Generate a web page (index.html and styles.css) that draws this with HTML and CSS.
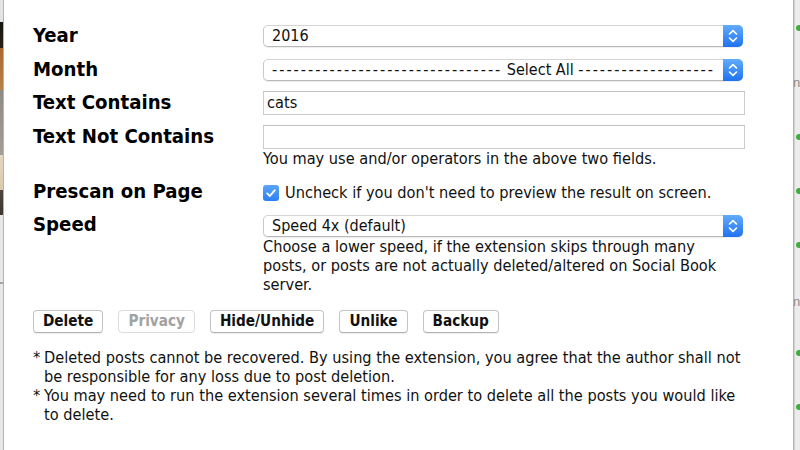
FILE: index.html
```html
<!DOCTYPE html>
<html lang="en">
<head>
<meta charset="utf-8">
<title>Social Book Post Manager</title>
<link rel="stylesheet" href="styles.css">
</head>
<body>
<div class="screen">
  <div class="bg-left"></div>
  <div class="panel">
    <div class="row row-select r-year">
      <div class="label">Year</div>
      <div class="select">
        <span class="value">2016</span>
        <span class="stepper"><svg width="20" height="22" viewBox="0 0 20 22"><path d="M6.5 9 L10 5.6 L13.5 9 M6.5 13 L10 16.4 L13.5 13" fill="none" stroke="#fff" stroke-width="1.6" stroke-linecap="round" stroke-linejoin="round"/></svg></span>
      </div>
    </div>
    <div class="row row-select r-month">
      <div class="label">Month</div>
      <div class="select">
        <span class="value centered"><span class="dashes">--------------------------------</span> Select All <span class="dashes">-------------------</span></span>
        <span class="stepper"><svg width="20" height="22" viewBox="0 0 20 22"><path d="M6.5 9 L10 5.6 L13.5 9 M6.5 13 L10 16.4 L13.5 13" fill="none" stroke="#fff" stroke-width="1.6" stroke-linecap="round" stroke-linejoin="round"/></svg></span>
      </div>
    </div>
    <div class="row r-contains">
      <div class="label">Text Contains</div>
      <div class="input">cats</div>
    </div>
    <div class="row r-notcontains">
      <div class="label">Text Not Contains</div>
      <div class="control">
        <div class="input"></div>
        <div class="help">You may use and/or operators in the above two fields.</div>
      </div>
    </div>
    <div class="row r-prescan">
      <div class="label">Prescan on Page</div>
      <div class="check-line"><span class="checkbox"><svg width="16" height="16" viewBox="0 0 16 16"><path d="M4.2 8.4 L6.9 11 L11.8 5.2" fill="none" stroke="#fff" stroke-width="1.9" stroke-linecap="round" stroke-linejoin="round"/></svg></span>Uncheck if you don't need to preview the result on screen.</div>
    </div>
    <div class="row row-select r-speed">
      <div class="label">Speed</div>
      <div class="control">
        <div class="select">
          <span class="value">Speed 4x (default)</span>
          <span class="stepper"><svg width="20" height="22" viewBox="0 0 20 22"><path d="M6.5 9 L10 5.6 L13.5 9 M6.5 13 L10 16.4 L13.5 13" fill="none" stroke="#fff" stroke-width="1.6" stroke-linecap="round" stroke-linejoin="round"/></svg></span>
        </div>
        <div class="help speed-help">Choose a lower speed, if the extension skips through many posts, or posts are not actually deleted/altered on Social Book server.</div>
      </div>
    </div>
    <div class="buttons">
      <button class="btn">Delete</button>
      <button class="btn" disabled>Privacy</button>
      <button class="btn">Hide/Unhide</button>
      <button class="btn">Unlike</button>
      <button class="btn">Backup</button>
    </div>
    <div class="notes">
      <div class="note"><span class="star">*</span><span>Deleted posts cannot be recovered. By using the extension, you agree that the author shall not be responsible for any loss due to post deletion.</span></div>
      <div class="note"><span class="star">*</span><span>You may need to run the extension several times in order to delete all the posts you would like to delete.</span></div>
    </div>
  </div>
  <div class="bg-right">
    <span class="dot"></span>
    <span class="ghost">n</span>
    <span class="dot"></span>
    <span class="dot"></span>
    <span class="dot"></span>
    <span class="ghost">n</span>
    <span class="dot"></span>
    <span class="dot"></span>
  </div>
</div>
</body>
</html>
```
FILE: styles.css
```css
* { box-sizing: border-box; }
html, body { margin: 0; padding: 0; }
body {
  width: 800px;
  height: 450px;
  overflow: hidden;
  font-family: "DejaVu Sans Condensed", "DejaVu Sans", sans-serif;
  color: #111;
  background: #fff;
}
.screen { display: flex; width: 800px; height: 450px; }

.bg-left {
  flex: none;
  width: 4px;
  border-right: 1px solid #b3b3b3;
  background: linear-gradient(to bottom,
    #e4e4e4 0, #e4e4e4 22px,
    #17140f 22px, #2a2118 48px,
    #a9682f 48px, #b8804a 90px,
    #8e8a84 90px, #a29d95 155px,
    #e4d7c2 155px, #d9cab1 190px,
    #4d463e 190px, #3c362f 215px,
    #e8e8e8 215px, #e8e8e8 282px,
    #a5a5a5 282px, #a5a5a5 284px,
    #e8e8e8 284px);
}

.panel {
  flex: none;
  width: 789px;
  background: #fff;
  padding: 25px 0 0 29px;
}

.bg-right {
  flex: 1;
  border-left: 1px solid #b4b4b4;
  box-shadow: inset 1px 0 0 #d2d2d2;
  background: #ececec;
  overflow: hidden;
  display: flex;
  flex-direction: column;
  align-items: flex-start;
}
.dot {
  display: block;
  flex: none;
  width: 6px;
  height: 6px;
  margin-left: 2px;
  border-radius: 50%;
  background: #3fae3c;
}
.ghost {
  display: block;
  flex: none;
  height: 12px;
  line-height: 12px;
  font-family: "Liberation Sans", sans-serif;
  font-size: 13px;
  color: #8b8b8b;
  margin-left: -1px;
}
.bg-right > :nth-child(1) { margin-top: 25px; }
.bg-right > :nth-child(2) { margin-top: 46px; }
.bg-right > :nth-child(3) { margin-top: 45px; }
.bg-right > :nth-child(4) { margin-top: 48px; }
.bg-right > :nth-child(5) { margin-top: 48px; }
.bg-right > :nth-child(6) { margin-top: 48px; }
.bg-right > :nth-child(7) { margin-top: 42px; }
.bg-right > :nth-child(8) { margin-top: 48px; }

.row {
  display: grid;
  grid-template-columns: 230px 482px;
  align-items: start;
}
.label {
  font-weight: bold;
  font-size: 20.2px;
  line-height: 22px;
  color: #000;
  white-space: nowrap;
}
.row-select .label { margin-top: -1px; }
.r-month { margin-top: 12px; }
.r-contains { margin-top: 10px; }
.r-notcontains { margin-top: 10px; }
.r-prescan { margin-top: 11.5px; align-items: baseline; }
.r-speed { margin-top: 11px; }
.r-speed .label { margin-top: -2px; }

.select {
  width: 480px;
  height: 22px;
  display: flex;
  align-items: stretch;
  border: 1px solid #c8c8c8;
  border-top-color: #d4d4d4;
  border-bottom-color: #b9b9b9;
  border-radius: 5px;
  background: #fff;
  box-shadow: 0 1px 1px rgba(0, 0, 0, 0.08);
  font-size: 16px;
  line-height: 20px;
  color: #111;
}
.select .value {
  flex: 1;
  padding-left: 8px;
  white-space: nowrap;
  overflow: hidden;
}
.select .value.centered { text-align: center; padding-left: 0; }
.dashes { letter-spacing: 2px; }
.stepper {
  flex: none;
  width: 20px;
  margin: -1px -1px -1px 0;
  border-radius: 0 5px 5px 0;
  background: linear-gradient(to bottom, #62acfb, #1f72f0);
  display: flex;
}
.stepper svg { display: block; }

.input {
  width: 482px;
  height: 24px;
  border: 1px solid #cbcbcb;
  border-top-color: #c2c2c2;
  background: #fff;
  font-size: 16.2px;
  line-height: 22px;
  padding-left: 3px;
  color: #111;
}

.help {
  font-size: 16.2px;
  line-height: 19px;
  color: #111;
}
.speed-help { width: 470px; }

.check-line {
  font-size: 16.2px;
  line-height: 22px;
  white-space: nowrap;
  color: #111;
}
.checkbox {
  display: inline-block;
  width: 16px;
  height: 16px;
  margin-right: 6px;
  vertical-align: -3px;
  border-radius: 3px;
  background: linear-gradient(to bottom, #5aa5fa, #2c7ff3);
}
.checkbox svg { display: block; }

.buttons {
  margin-top: 16px;
  display: flex;
  gap: 15px;
}
.btn {
  height: 23px;
  padding: 0 9px;
  border: 1px solid #c4c4c4;
  border-bottom-color: #b3b3b3;
  border-radius: 4px;
  background: #fff;
  box-shadow: 0 1px 1px rgba(0, 0, 0, 0.07);
  font-family: "DejaVu Sans Condensed", "DejaVu Sans", sans-serif;
  font-weight: bold;
  font-size: 15.2px;
  line-height: 21px;
  color: #111;
}
.btn:disabled {
  color: #a2a2a2;
  border-color: #dcdcdc;
  box-shadow: none;
}

.notes {
  margin-top: 15.5px;
  width: 712px;
  font-size: 16.2px;
  line-height: 19px;
  color: #111;
}
.note { display: flex; }
.star { flex: none; width: 11px; }
```
